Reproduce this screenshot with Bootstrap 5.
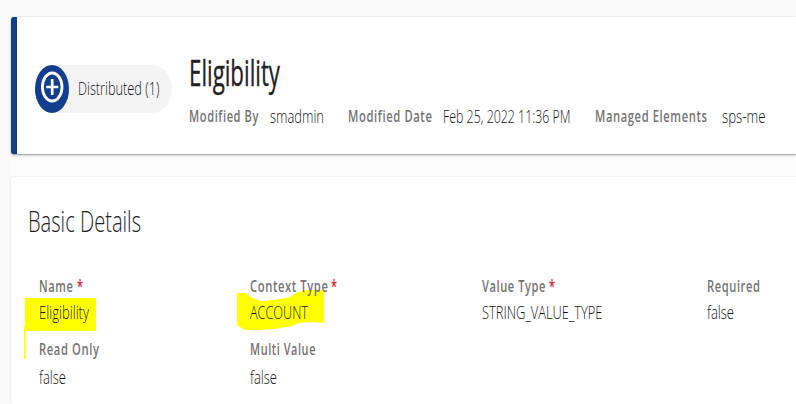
<!DOCTYPE html>
<html lang="en">
<head>
<meta charset="utf-8">
<meta name="viewport" content="width=device-width, initial-scale=1">
<title>Eligibility</title>
<link href="https://cdn.jsdelivr.net/npm/bootstrap@5.3.0/dist/css/bootstrap.min.css" rel="stylesheet">
<style>
body{background:#fafafa;font-family:"Open Sans","Noto Sans",sans-serif;width:796px;height:404px;overflow:hidden;color:#222}
.page{height:404px;overflow:hidden;padding:17px 0 0 11px}
.panel{background:#fff;border-radius:3px 0 0 3px}
.head-panel{height:137px;border-left:6px solid #123f8d;padding:0 0 0 18px;box-shadow:0 1px 1px #aaa,0 2px 3px rgba(0,0,0,.15),0 -1px 1px rgba(0,0,0,.05)}
.stack{background:#fdfdfd}
.detail-panel{height:227px;margin-top:23px;padding:24px 0 0 17px;box-shadow:0 0 2px rgba(0,0,0,.15)}
.pill{width:137px;height:48px;border-radius:20px/24px;background:#f4f4f4;margin-top:48px}
.pill svg{width:34px;height:48px;margin-right:9px}
.pill .fit{margin-top:-3px}
.head-text{margin:32px 0 0 17px}
.fit{display:block;flex:none;white-space:nowrap;height:24px;line-height:24px}
.fit>span{display:inline-block;transform-origin:0 50%}
.title{font-size:36px;height:48px;line-height:48px;font-weight:400;color:#222;margin:0;-webkit-text-stroke:.35px #222}
.section{font-size:29px;height:40px;line-height:40px;font-weight:300;margin:0;color:#222}
.lbl{font-size:16.8px;font-weight:600;letter-spacing:.9px;color:#747474}
.val{font-size:18.8px;font-weight:300;color:#161616}
.star{font-size:18px;font-weight:600;color:#d8232a;margin-left:3px}
.meta{margin-top:7px}
.gap-val{margin-left:10.5px}
.gap-lbl{margin-left:24.5px}
.fields{display:grid;grid-template-columns:210.5px 232px 225px 90px;margin:33px 0 0 11px}
.field{height:63px;isolation:isolate}
.field .val{margin-top:2px}
.field .short{margin-top:3.5px}
.mark-ink{position:absolute;z-index:-1;fill:#ff0}
.ink-a{left:-15px;top:23px;width:73px;height:62px}
.ink-b{left:-13px;top:16px;width:88px;height:41px}
</style>
<script src="https://cdn.jsdelivr.net/npm/bootstrap@5.3.0/dist/js/bootstrap.bundle.min.js"></script>
</head>
<body>
<main class="page">
 <div class="stack">
  <header class="panel head-panel d-flex align-items-start">
    <div class="pill d-flex align-items-center">
      <svg viewBox="0 0 34 48" aria-hidden="true"><ellipse cx="17" cy="24" rx="17" ry="24" fill="#123f8d"/><g fill="none" stroke="#fff"><ellipse cx="17.2" cy="22" rx="9.8" ry="14" stroke-width="2.8"/><path d="M11.2 22h12M17.2 14v16" stroke-width="2.7"/></g></svg>
      <span class="fit val" data-w="81.5"><span>Distributed (1)</span></span>
    </div>
    <div class="head-text">
      <h1 class="fit title" data-w="91"><span>Eligibility</span></h1>
      <div class="meta d-flex">
        <span class="fit lbl" data-w="70"><span>Modified By</span></span>
        <span class="fit val gap-val" data-w="54"><span>smadmin</span></span>
        <span class="fit lbl gap-lbl" data-w="84.5"><span>Modified Date</span></span>
        <span class="fit val gap-val" data-w="127.5"><span>Feb 25, 2022 11:36 PM</span></span>
        <span class="fit lbl gap-lbl" data-w="112.5"><span>Managed Elements</span></span>
        <span class="fit val gap-val ps-1" data-w="43.5"><span>sps-me</span></span>
      </div>
    </div>
  </header>
  <section class="panel detail-panel">
    <h2 class="fit section" data-w="113"><span>Basic Details</span></h2>
    <div class="fields">
      <div class="field position-relative">
        <svg class="mark-ink ink-a" viewBox="0 0 73 62" aria-hidden="true"><path d="M1 1h71v33H1zM0 29h1.5v33H0z"/></svg>
        <div class="d-flex"><span class="fit lbl" data-w="34.5"><span>Name</span></span><span class="fit star" data-w="6"><span>*</span></span></div>
        <span class="fit val" data-w="50"><span>Eligibility</span></span>
      </div>
      <div class="field position-relative">
        <svg class="mark-ink ink-b" viewBox="0 0 88 41" aria-hidden="true"><path d="M0 3h9l6 5 9 3 14-1 15-3 8-5 10-2h16v33l-14-1-11 1-7 3-17 3-17 1H8l-8-5z"/></svg>
        <div class="d-flex"><span class="fit lbl" data-w="78.5"><span>Context Type</span></span><span class="fit star" data-w="6"><span>*</span></span></div>
        <span class="fit val" data-w="58"><span>ACCOUNT</span></span>
      </div>
      <div class="field">
        <div class="d-flex"><span class="fit lbl" data-w="64"><span>Value Type</span></span><span class="fit star" data-w="6"><span>*</span></span></div>
        <span class="fit val" data-w="120.5"><span>STRING_VALUE_TYPE</span></span>
      </div>
      <div class="field">
        <span class="fit lbl" data-w="53.5"><span>Required</span></span>
        <span class="fit val" data-w="27"><span>false</span></span>
      </div>
      <div class="field">
        <span class="fit lbl" data-w="60.5"><span>Read Only</span></span>
        <span class="fit val short" data-w="27"><span>false</span></span>
      </div>
      <div class="field">
        <span class="fit lbl" data-w="66"><span>Multi Value</span></span>
        <span class="fit val short" data-w="27"><span>false</span></span>
      </div>
    </div>
  </section>
 </div>
</main>
<script>
document.querySelectorAll('.fit').forEach(el => {
  const t = el.firstElementChild, w = parseFloat(el.dataset.w);
  const scale = w / t.getBoundingClientRect().width;
  el.style.boxSizing = 'content-box';
  el.style.width = w + 'px';
  t.style.transform = `scaleX(${scale})`;
});
</script>
</body>
</html>
